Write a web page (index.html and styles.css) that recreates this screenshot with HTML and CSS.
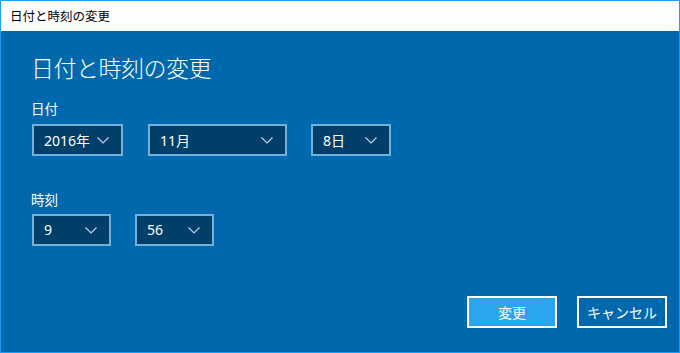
FILE: index.html
```html
<!DOCTYPE html>
<html lang="ja">
<head>
  <meta charset="UTF-8">
  <title>日付と時刻の変更</title>
  <link rel="stylesheet" href="styles.css">
</head>
<body>
  <div class="window">
    <!-- Title bar -->
    <div class="titlebar">日付と時刻の変更</div>

    <div class="content">
      <h1 class="heading">日付と時刻の変更</h1>

      <!-- Date -->
      <div class="group-label">日付</div>
      <div class="row date-row">
        <div class="select w-year"><span>2016年</span><svg class="chev" viewBox="0 0 12 7"><polyline points="0.5,0.5 6,6 11.5,0.5"/></svg></div>
        <div class="select w-month"><span>11月</span><svg class="chev" viewBox="0 0 12 7"><polyline points="0.5,0.5 6,6 11.5,0.5"/></svg></div>
        <div class="select w-day"><span>8日</span><svg class="chev" viewBox="0 0 12 7"><polyline points="0.5,0.5 6,6 11.5,0.5"/></svg></div>
      </div>

      <!-- Time -->
      <div class="group-label time-label">時刻</div>
      <div class="row time-row">
        <div class="select w-time"><span>9</span><svg class="chev" viewBox="0 0 12 7"><polyline points="0.5,0.5 6,6 11.5,0.5"/></svg></div>
        <div class="select w-time"><span>56</span><svg class="chev" viewBox="0 0 12 7"><polyline points="0.5,0.5 6,6 11.5,0.5"/></svg></div>
      </div>

      <!-- Buttons -->
      <div class="actions">
        <button class="btn primary">変更</button>
        <button class="btn">キャンセル</button>
      </div>
    </div>
  </div>
</body>
</html>
```
FILE: styles.css
```css
body { margin: 0; font-family: "Noto Sans", "Noto Sans CJK JP", sans-serif; }
.window { width: 680px; height: 353px; box-sizing: border-box; border: 1px solid #1b9cf2; display: flex; flex-direction: column; background: #0068ad; }
.titlebar { height: 30px; background: #fff; color: #000; font-size: 12.5px; line-height: 30px; padding-left: 9px; font-family: "Noto Sans CJK JP", sans-serif; }
.content { flex: 1; padding: 0 12px 0 30px; display: flex; flex-direction: column; color: #fff; }
.heading { margin: 20px 0 0; font-size: 23px; font-weight: 300; line-height: 32px; letter-spacing: -0.5px; font-family: "Noto Sans CJK JP", sans-serif; }
.group-label { margin-top: 15px; font-size: 13.5px; line-height: 20px; font-family: "Noto Sans CJK JP", sans-serif; }
.time-label { margin-top: 33px; }
.row { display: flex; margin-top: 6px; }
.date-row { gap: 25px; }
.date-row .w-day { margin-left: -1px; }
.time-row { gap: 24px; margin-top: 5px; }
.select { height: 32px; box-sizing: border-box; border: 2px solid #73b0dc; background: #003f6a; display: flex; align-items: center; justify-content: space-between; padding: 0 12px 0 10px; font-size: 14px; }
.select span { margin-top: -1px; }
.w-year { width: 91px; margin-left: 1px; }
.w-month { width: 139px; }
.w-day { width: 80px; }
.w-time { width: 79px; margin-left: 1px; }
.w-time + .w-time { margin-left: 0; }
.chev { width: 12px; height: 7px; fill: none; stroke: #b9d4ea; stroke-width: 1.2; }
.actions { margin-top: auto; margin-bottom: 24px; display: flex; justify-content: flex-end; gap: 20px; }
.btn { width: 90px; height: 32px; box-sizing: border-box; border: 2px solid #fff; background: transparent; color: #fff; font-size: 14px; font-family: "Noto Sans CJK JP", sans-serif; padding: 0; }
.btn.primary { background: #2aa6f0; }
```
